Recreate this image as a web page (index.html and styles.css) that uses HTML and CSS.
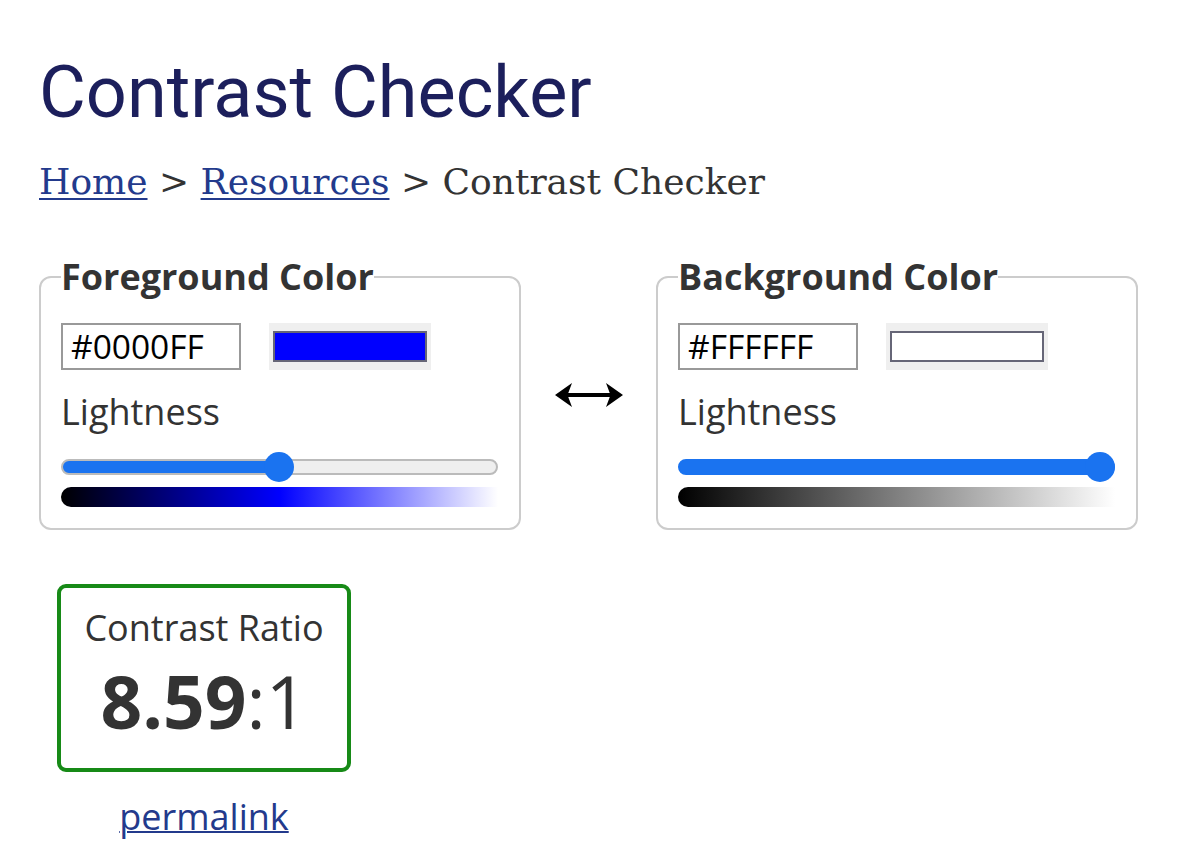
FILE: index.html
```html
<!DOCTYPE html>
<html lang="en">
<head>
<meta charset="utf-8">
<title>Contrast Checker</title>
<link rel="stylesheet" href="styles.css">
</head>
<body>
<main class="page">
  <h1 class="title">Contrast Checker</h1>
  <nav class="crumbs"><a href="#">Home</a> &gt; <a href="#">Resources</a> &gt; Contrast Checker</nav>

  <div class="pickers">
    <fieldset class="picker">
      <legend>Foreground Color</legend>
      <div class="hexrow">
        <div class="hex">#0000FF</div>
        <div class="swatch"><span class="chip" style="background:#0000ff"></span></div>
      </div>
      <div class="label">Lightness</div>
      <div class="slider">
        <div class="track" style="--pos:50%"></div>
        <div class="thumb" style="--pos:50%"></div>
      </div>
      <div class="grad grad-fg"></div>
    </fieldset>

    <div class="swap" aria-label="Swap colors">
      <svg width="68" height="26" viewBox="0 0 68 26" aria-hidden="true">
        <line x1="8" y1="13" x2="60" y2="13" stroke="#000" stroke-width="4"/>
        <path d="M0 13 L17 1 L12.5 13 L17 25 Z" fill="#000"/>
        <path d="M68 13 L51 1 L55.5 13 L51 25 Z" fill="#000"/>
      </svg>
    </div>

    <fieldset class="picker">
      <legend>Background Color</legend>
      <div class="hexrow">
        <div class="hex">#FFFFFF</div>
        <div class="swatch"><span class="chip" style="background:#ffffff"></span></div>
      </div>
      <div class="label">Lightness</div>
      <div class="slider">
        <div class="track track-full" style="--pos:100%"></div>
        <div class="thumb" style="--pos:100%"></div>
      </div>
      <div class="grad grad-bg"></div>
    </fieldset>
  </div>

  <div class="result">
    <div class="ratio">
      <div class="ratio-label">Contrast Ratio</div>
      <div class="ratio-value"><b>8.59</b>:1</div>
    </div>
    <a class="permalink" href="#">permalink</a>
  </div>
</main>
</body>
</html>
```
FILE: styles.css
```css
html, body {
  margin: 0;
  padding: 0;
  background: #ffffff;
}

.page {
  padding: 50px 0 0 39px;
  font-family: "Open Sans", "Liberation Sans", sans-serif;
  color: #333333;
}

.title {
  margin: 0;
  font-family: Roboto, "Liberation Sans", sans-serif;
  font-weight: 400;
  font-size: 72px;
  line-height: 86px;
  color: #1c1f5c;
}

.crumbs {
  margin-top: 23px;
  font-family: "DejaVu Serif", "Liberation Serif", serif;
  font-size: 36px;
  line-height: 46px;
  color: #333333;
}

.crumbs a {
  color: #233a8c;
  text-decoration: underline;
  text-decoration-thickness: 2px;
  text-underline-offset: 4px;
}

.pickers {
  display: flex;
  align-items: flex-start;
  margin-top: 48px;
}

.picker {
  margin: 0;
  width: 482px;
  box-sizing: border-box;
  border: 2px solid #cccccc;
  border-radius: 12px;
  padding: 0 20px 21px 20px;
}

.picker legend {
  padding: 0;
  font-weight: 700;
  font-size: 36px;
  line-height: 48px;
  color: #333333;
}

.hexrow {
  display: flex;
  align-items: center;
  gap: 28px;
  margin-top: 22px;
}

.hex {
  width: 180px;
  height: 47px;
  box-sizing: border-box;
  border: 2px solid #999999;
  padding: 0 8px;
  font-size: 33.5px;
  line-height: 43px;
  color: #000000;
}

.swatch {
  width: 162px;
  height: 47px;
  box-sizing: border-box;
  background: #efefef;
  padding: 8px 4px;
  display: flex;
}

.chip {
  flex: 1;
  border: 2px solid #666677;
}

.label {
  margin-top: 18px;
  font-size: 36px;
  line-height: 48px;
  color: #333333;
}

.slider {
  position: relative;
  height: 30px;
  margin-top: 16px;
  width: 437px;
}

.track {
  position: absolute;
  left: 0;
  right: 0;
  top: 7px;
  height: 16px;
  box-sizing: border-box;
  border-radius: 8px;
  border: 2px solid #bbbbbb;
  background: linear-gradient(to right, #1a73f0 0, #1a73f0 calc(15px + (100% - 30px) * var(--pos) / 100%), #efefef calc(15px + (100% - 30px) * var(--pos) / 100%));
}

.track-full {
  border-color: #1a73f0;
}

.thumb {
  position: absolute;
  top: 0;
  left: calc((100% - 30px) * var(--pos) / 100%);
  width: 30px;
  height: 30px;
  border-radius: 50%;
  background: #1a73f0;
}

.grad {
  width: 437px;
  height: 20px;
  margin-top: 5px;
  border-radius: 10px 0 0 10px;
}

.grad-fg {
  background: linear-gradient(to right, #000000, #0000ff 50%, #ffffff);
}

.grad-bg {
  background: linear-gradient(to right, #000000, #ffffff);
}

.swap {
  width: 135px;
  display: flex;
  justify-content: center;
  margin-top: 129px;
  padding-left: 1px;
  box-sizing: border-box;
}

.swap svg {
  display: block;
}

.result {
  display: flex;
  flex-direction: column;
  align-items: center;
  width: 294px;
  margin: 54px 0 0 18px;
}

.ratio {
  width: 294px;
  height: 188px;
  box-sizing: border-box;
  border: 4px solid #178a17;
  border-radius: 9px;
  text-align: center;
  padding-top: 16px;
}

.ratio-label {
  font-size: 36px;
  line-height: 48px;
  color: #333333;
}

.ratio-value {
  margin-top: 4px;
  font-size: 73px;
  line-height: 90px;
  color: #333333;
}

.ratio-value b {
  font-weight: 700;
}

.permalink {
  margin-top: 21px;
  font-size: 36px;
  line-height: 48px;
  color: #233a8c;
  text-decoration: underline;
  text-decoration-thickness: 2px;
}
```
